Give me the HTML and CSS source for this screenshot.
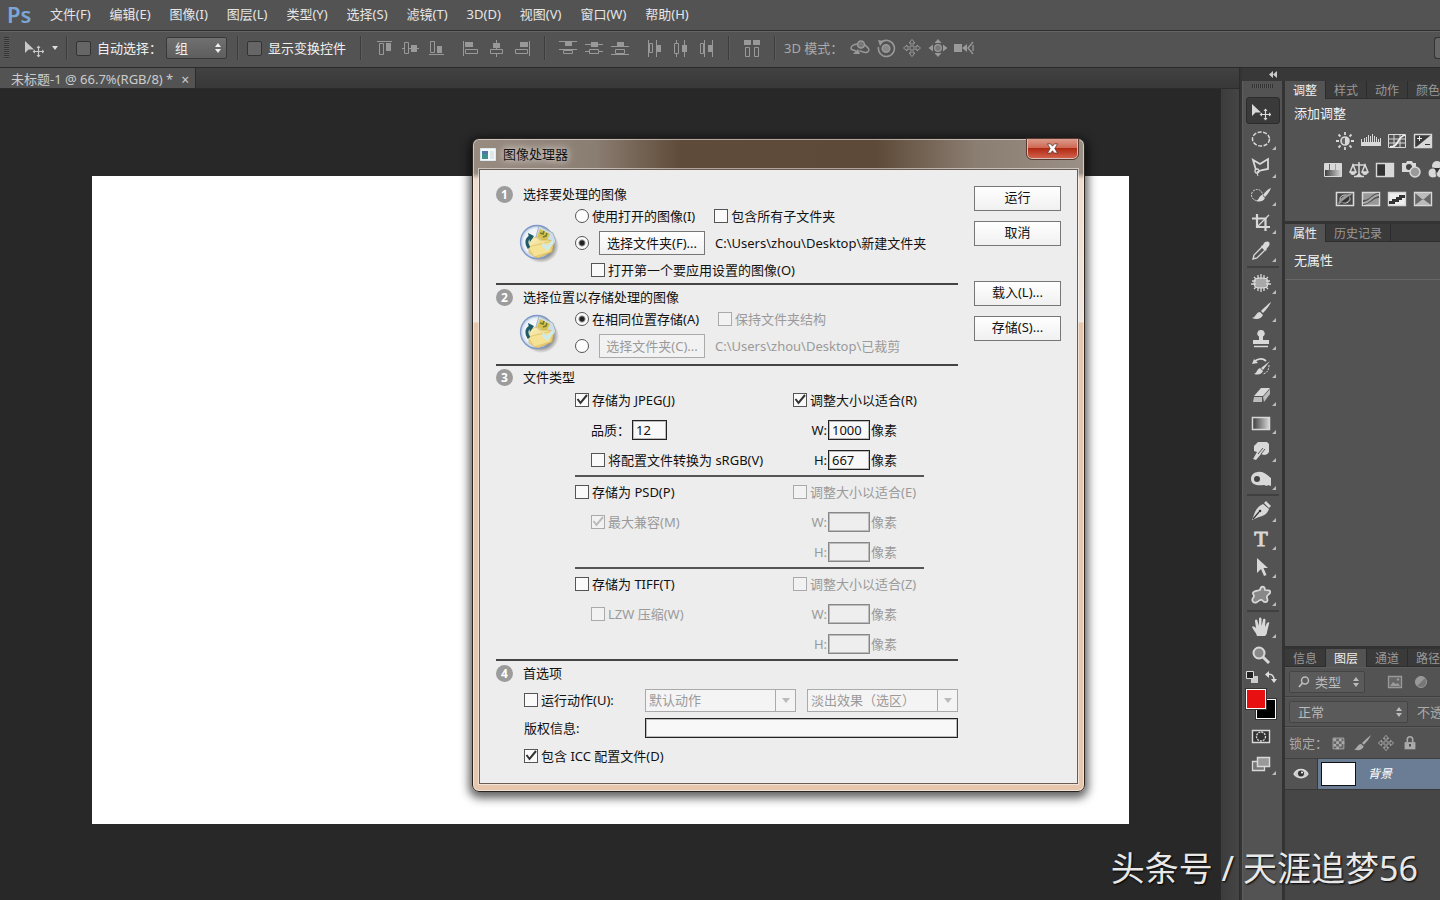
FILE: index.html
```html
<!DOCTYPE html>
<html lang="zh-CN">
<head>
<meta charset="utf-8">
<title>未标题-1</title>
<link rel="stylesheet" href="styles.css">
</head>
<body>
<svg class="defs" aria-hidden="true">
  <defs>
    <linearGradient id="fade" x1="0" x2="1"><stop offset="0" stop-color="#3c3c3c"/><stop offset="1" stop-color="#d8d8d8"/></linearGradient>
    <linearGradient id="folderFill" x1="0" x2="1" y1="0" y2="1"><stop offset="0" stop-color="#fbf2bd"/><stop offset="1" stop-color="#e3c35c"/></linearGradient>
    <radialGradient id="discFill"><stop offset="0" stop-color="#fff"/><stop offset=".8" stop-color="#eef3f8"/><stop offset="1" stop-color="#b4c6e0"/></radialGradient>
    <radialGradient id="discShade"><stop offset=".6" stop-color="#444" stop-opacity=".7"/><stop offset="1" stop-color="#444" stop-opacity="0"/></radialGradient>
  </defs>
  <symbol id="move" viewBox="0 0 20 20"><path d="M1 3v12l3.500-3.500H10z" fill="currentColor"/><path d="M14.500 8v11M9 13.500h11" stroke="currentColor" stroke-width="1.200"/><path d="M12.500 10l2-2.500 2 2.500zM12.500 17l2 2.500 2-2.500zM11 11.500l-2.500 2 2.500 2zM18 11.500l2.500 2-2.500 2z" fill="currentColor"/></symbol>
  <symbol id="cross" viewBox="0 0 20 20"><path d="M10 1.500l3 3.500h-2v4h4V7l3.500 3-3.500 3v-2h-4v4h2l-3 3.500L7 15h2v-4H5v2l-3.500-3L5 7v2h4V5H7z" fill="none" stroke="currentColor"/></symbol>
  <symbol id="al-top" viewBox="0 0 20 20"><path d="M3 3.500h15" stroke="currentColor"/><path d="M5.500 5.500h4v11h-4z" fill="none" stroke="currentColor"/><path d="M12 5h5v8h-5z" fill="currentColor"/></symbol>
  <symbol id="al-mid" viewBox="0 0 20 20"><path d="M2 10.500h3M9 10.500h10" stroke="currentColor"/><path d="M4.500 4.500h4v11h-4z" fill="none" stroke="currentColor"/><path d="M11 7h6v7h-6z" fill="currentColor"/></symbol>
  <symbol id="al-bot" viewBox="0 0 20 20"><path d="M3 16.500h15" stroke="currentColor"/><path d="M4.500 3.500h4v11h-4z" fill="none" stroke="currentColor"/><path d="M11 8h5v7h-5z" fill="currentColor"/></symbol>
  <symbol id="al-left" viewBox="0 0 20 20"><path d="M3.500 3v15" stroke="currentColor"/><path d="M5.500 11.500h12v4h-12z" fill="none" stroke="currentColor"/><path d="M5 4h8v5H5z" fill="currentColor"/></symbol>
  <symbol id="al-cen" viewBox="0 0 20 20"><path d="M10.500 2v9M10.500 16v3" stroke="currentColor"/><path d="M4.500 11.500h12v4h-12z" fill="none" stroke="currentColor"/><path d="M7 5h7v5H7z" fill="currentColor"/></symbol>
  <symbol id="al-right" viewBox="0 0 20 20"><path d="M17.500 3v15" stroke="currentColor"/><path d="M3.500 11.500h12v4h-12z" fill="none" stroke="currentColor"/><path d="M8 4h8v5H8z" fill="currentColor"/></symbol>
  <symbol id="di-top" viewBox="0 0 20 20"><path d="M1 3.500h18M1 11.500h18" stroke="currentColor"/><path d="M5.500 12.500h9v3h-9z" fill="none" stroke="currentColor"/><path d="M7 4h7v4H7z" fill="currentColor"/></symbol>
  <symbol id="di-mid" viewBox="0 0 20 20"><path d="M1 6.500h18M1 13.500h5M14 13.500h5" stroke="currentColor"/><path d="M5.500 11.500h9v4h-9z" fill="none" stroke="currentColor"/><path d="M7 4h7v5H7z" fill="currentColor"/></symbol>
  <symbol id="di-bot" viewBox="0 0 20 20"><path d="M1 8.500h18M1 16.500h18" stroke="currentColor"/><path d="M5.500 11.500h9v4h-9z" fill="none" stroke="currentColor"/><path d="M7 4h7v4H7z" fill="currentColor"/></symbol>
  <symbol id="di-left" viewBox="0 0 20 20"><path d="M4.500 2v17M12.500 2v17" stroke="currentColor"/><path d="M5.500 5.500h3v9h-3z" fill="none" stroke="currentColor"/><path d="M13 7h4v7h-4z" fill="currentColor"/></symbol>
  <symbol id="di-cen" viewBox="0 0 20 20"><path d="M6.500 2v3M6.500 16v3M14.500 2v17" stroke="currentColor"/><path d="M4.500 5.500h4v10h-4z" fill="none" stroke="currentColor"/><path d="M12 7h5v7h-5z" fill="currentColor"/></symbol>
  <symbol id="di-right" viewBox="0 0 20 20"><path d="M8.500 2v17M16.500 2v17" stroke="currentColor"/><path d="M4.500 5.500h3v10h-3z" fill="none" stroke="currentColor"/><path d="M12 7h4v7h-4z" fill="currentColor"/></symbol>
  <symbol id="auto" viewBox="0 0 20 20"><path d="M2 2h7v5H2zM11 2h7v5h-7z" fill="currentColor"/><path d="M3.500 9.500h4v9h-4zM12.500 9.500h4v9h-4z" fill="none" stroke="currentColor"/></symbol>
  <symbol id="orbit" viewBox="0 0 20 20"><path d="M8 6C3 6 0 9 1.500 11.500L6 13M13 6c4 2 8 6 4.500 8-3 1.500-6-.5-8-1.500" fill="none" stroke="currentColor" stroke-width="1.500"/><circle cx="11" cy="6.500" r="3.500" fill="#777" stroke="currentColor" stroke-width="1.500"/><path d="M3 16l5-5 2 5z" fill="currentColor"/></symbol>
  <symbol id="roll" viewBox="0 0 20 20"><path d="M5 4.500A8 8 0 1 1 2.500 9" fill="none" stroke="currentColor" stroke-width="1.600"/><circle cx="10" cy="10.500" r="3.800" fill="#888" stroke="currentColor" stroke-width="1.500"/><path d="M2 2l6 1-4 5z" fill="currentColor"/></symbol>
  <symbol id="slide" viewBox="0 0 20 20"><circle cx="10" cy="10" r="3.300" fill="#777" stroke="currentColor" stroke-width="1.300"/><path d="M6.500 5l3.500-4 3.500 4zM6.500 15l3.500 4 3.500-4zM5 6.500L.5 10 5 13.500zM15 6.500l4.500 3.500-4.500 3.500z" fill="currentColor"/></symbol>
  <symbol id="camera" viewBox="0 0 20 20"><path d="M0 6h8v8H0zM8 10l5-4v8z" fill="currentColor"/><path d="M19 4l-5 6 5 6M19 7v6" fill="none" stroke="currentColor" stroke-width="1.300"/></symbol>
  <symbol id="marquee" viewBox="0 0 20 20"><ellipse cx="10" cy="10" rx="8.500" ry="7" fill="none" stroke="currentColor" stroke-width="1.500" stroke-dasharray="4 1.500"/></symbol>
  <symbol id="lasso" viewBox="0 0 20 20"><path d="M5 13L2 3l7 4 8-5v10l-6 1-5 2" fill="none" stroke="currentColor" stroke-width="1.800"/><circle cx="6" cy="14" r="2" fill="none" stroke="currentColor" stroke-width="1.300"/><path d="M6 16l1 3" stroke="currentColor"/></symbol>
  <symbol id="quick" viewBox="0 0 20 20"><circle cx="6" cy="10" r="5.500" fill="none" stroke="currentColor" stroke-dasharray="2 1"/><path d="M20 3c-1 3-4 7-6 9l-2-2c2-3 5-6 8-7zM11 10l3 3c-2 4-6 4-9 3 3-1 3-5 6-6z" fill="currentColor"/></symbol>
  <symbol id="crop" viewBox="0 0 20 20"><path d="M6 1v13h13M1 5.500h13.500V18" fill="none" stroke="currentColor" stroke-width="2.200"/><path d="M6 14L18 2" stroke="currentColor" stroke-width="1.200"/></symbol>
  <symbol id="dropper" viewBox="0 0 20 20"><path d="M2 18l1-4 8-8 3 3-8 8z" fill="none" stroke="currentColor" stroke-width="1.300"/><path d="M10 5l2-1c1-4 5-4 6-3s1 4-2 6l-1 3z" fill="currentColor"/></symbol>
  <symbol id="heal" viewBox="0 0 20 20"><rect x="3" y="5" width="14" height="10" rx="4" fill="#a8a8a8" stroke="currentColor"/><path d="M7 2v4M10 1v5M13 2v4M7 14v4M10 14v5M13 14v4M1 8h4M0 11h5M15 8h4M15 11h5M3 4l2 2M17 4l-2 2M3 16l2-2M17 16l-2-2" stroke="currentColor" stroke-width="1.300"/></symbol>
  <symbol id="brush" viewBox="0 0 20 20"><path d="M20 1c-1 3-5 8-8 11l-2-2C13 7 17 3 20 1zM9 11l3 3c-2 4-6 5-11 3 4-1 4-6 8-6z" fill="currentColor"/></symbol>
  <symbol id="stamp" viewBox="0 0 20 20"><path d="M10 1a3.500 3.500 0 0 1 2 6.500V11h6v4H2v-4h6V7.500A3.500 3.500 0 0 1 10 1z" fill="currentColor"/><path d="M3 17.500h14" stroke="currentColor" stroke-width="1.500"/></symbol>
  <symbol id="history" viewBox="0 0 20 20"><path d="M3 5c4-4 9-4 12-1" fill="none" stroke="currentColor" stroke-width="1.800"/><path d="M1 7l2-5 4 4zM19 4l-7 9-2-2zM9 11l3 3c-2 4-5 4-9 3 3-1 3-5 6-6z" fill="currentColor"/><path d="M18 8c0 5-2 8-6 9" fill="none" stroke="currentColor" stroke-dasharray="2 1"/></symbol>
  <symbol id="eraser" viewBox="0 0 20 20"><path d="M10 3h9l-7 8H3z" fill="currentColor"/><path d="M3 12h8v5H2zM12 12l7-8v5l-6 8z" fill="#bbb"/></symbol>
  <symbol id="grad" viewBox="0 0 20 20"><path d="M1.500 4.500h17v12h-17z" fill="url(#fade)" stroke="currentColor" stroke-width="1.500"/></symbol>
  <symbol id="smudge" viewBox="0 0 20 20"><path d="M7 1h9l2 2v8c-1 2-3 3-5 3l-3-1-5 6-3-1 4-7-3-1V5z" fill="currentColor"/><path d="M7 13l5-6M10 13l4-5" stroke="#555"/></symbol>
  <symbol id="sponge" viewBox="0 0 20 20"><path d="M7 3c5-1 9 3 13 6v8l-3-1-1 1-3-1c-6 1-13 0-13-6 0-4 3-7 7-7z" fill="currentColor"/><circle cx="6" cy="10" r="3" fill="#444"/></symbol>
  <symbol id="pen" viewBox="0 0 20 20"><path d="M12 3l6 5c-2 5-5 7-10 8l-7 3 3-8c2-4 4-6 8-8zM13 2l2-2 5 5-2 2z" fill="currentColor"/><path d="M2 18l6-7" stroke="#333" stroke-width="1.200"/><circle cx="9" cy="10" r="1.300" fill="#333"/></symbol>
  <symbol id="arrow" viewBox="0 0 20 20"><path d="M6 1v15l4-4 3 7 2.500-1-3-7H17z" fill="currentColor"/></symbol>
  <symbol id="shape" viewBox="0 0 20 20"><path d="M9 5c1-5 5-4 5 0 3 0 6 0 5 3-1 2-4 2-3 5 2 4-2 6-5 2-2-1-3 1-5 2-3 2-6-1-4-4 1-1 2-2 0-4-1-3 4-3 7-4z" fill="#888" stroke="currentColor" stroke-width="1.700"/></symbol>
  <symbol id="hand" viewBox="0 0 20 20"><path d="M6 19c-1-4-4-6-5-9 1-2 3 0 4 1L4 4c0-2 2-2 2.500 0L8 9V2c0-2 2.500-2 2.500 0v7L12 3c.5-2 2.500-1 2.500 0L14 10l2-4c1-1 3-1 2 1l-2 8c0 2-1 3-2 4z" fill="currentColor"/></symbol>
  <symbol id="zoomtool" viewBox="0 0 20 20"><circle cx="8" cy="8" r="5.500" fill="#888" stroke="currentColor" stroke-width="2"/><path d="M12 12l6 6" stroke="currentColor" stroke-width="3"/></symbol>
  <symbol id="mask" viewBox="0 0 20 20"><path d="M1.500 4.500h17v12h-17z" fill="#333" stroke="currentColor" stroke-width="1.400"/><circle cx="10" cy="10.500" r="4.500" fill="none" stroke="currentColor" stroke-width="1.300" stroke-dasharray="2 1"/></symbol>
  <symbol id="screen" viewBox="0 0 20 20"><path d="M1.500 7.500h12v9h-12z" fill="#777" stroke="currentColor" stroke-width="1.300"/><path d="M6.500 3.500h12v9h-12z" fill="#999" stroke="currentColor" stroke-width="1.500"/></symbol>
  <symbol id="defcol" viewBox="0 0 12 12"><path d="M5 5h7v7H5z" fill="#ccc"/><path d="M.5.5h7v7h-7z" fill="#222" stroke="currentColor"/></symbol>
  <symbol id="swap" viewBox="0 0 12 12"><path d="M3 3.500c4-1 6 2 6 5" fill="none" stroke="currentColor" stroke-width="1.500"/><path d="M0 3.500L4 0v7zM6 8h6l-3 4z" fill="currentColor"/></symbol>
  <symbol id="sun" viewBox="0 0 20 20"><circle cx="10" cy="10" r="4" fill="#666" stroke="currentColor" stroke-width="1.600"/><path d="M10 6a4 4 0 0 1 0 8z" fill="currentColor"/><path d="M10 1v3M10 16v3M1 10h3M16 10h3M3.500 3.500l2 2M14.500 14.500l2 2M3.500 16.500l2-2M14.500 5.500l2-2" stroke="currentColor" stroke-width="1.800"/></symbol>
  <symbol id="levels" viewBox="0 0 20 20"><path d="M0 15V8h1v3h2V7h1v4h1V6h1v5h1V4h1v7h1V5h1v6h1V3h1v8h1V5h1v6h1V6h1v5h1V8h1v3h1V7h1v8z" fill="currentColor"/></symbol>
  <symbol id="curves" viewBox="0 0 20 20"><path d="M1.500 3.500h17v13h-17zM7 4v13M13 4v13M2 8h17M2 12h17" fill="none" stroke="currentColor"/><path d="M3 16c9 0 7-10 15-12" fill="none" stroke="#eee" stroke-width="1.800"/></symbol>
  <symbol id="expo" viewBox="0 0 20 20"><path d="M1.500 3.500h17v13h-17z" fill="#3a3a3a" stroke="currentColor" stroke-width="1.400"/><path d="M18 4v13H2z" fill="currentColor"/><path d="M4 7.500h5M6.500 5v5" stroke="#eee"/><path d="M12 13.500h5" stroke="#333"/></symbol>
  <symbol id="vib" viewBox="0 0 20 20"><path d="M1.500 3.500h17v13h-17z" fill="url(#fade)" stroke="currentColor"/><path d="M2 4h4v6H2zM7 4h5v6H7zM13 4h5v6h-5z" fill="currentColor"/></symbol>
  <symbol id="scales" viewBox="0 0 20 20"><path d="M10 2v12M3 5h14M4 5l-3 7h6zM16 5l-3 7h6zM5 16.500h10" fill="none" stroke="currentColor" stroke-width="1.500"/><path d="M1 12h6c0 4-6 4-6 0zM13 12h6c0 4-6 4-6 0zM10 13l4 4H6z" fill="currentColor"/></symbol>
  <symbol id="bw" viewBox="0 0 20 20"><path d="M1.500 3.500h17v13h-17z" fill="#333" stroke="currentColor" stroke-width="1.400"/><path d="M10 4h8v12h-8z" fill="currentColor"/></symbol>
  <symbol id="photo" viewBox="0 0 20 20"><path d="M1 3h4l1-2h5l1 2h3v9H1z" fill="currentColor"/><circle cx="8" cy="7" r="3" fill="#444"/><circle cx="14" cy="12" r="5" fill="#999" stroke="currentColor" stroke-width="1.500"/></symbol>
  <symbol id="mixer" viewBox="0 0 20 20"><circle cx="10" cy="6" r="5" fill="currentColor"/><circle cx="6" cy="13" r="5" fill="currentColor" stroke="#555"/><circle cx="14" cy="13" r="5" fill="currentColor" stroke="#555"/><path d="M7 8h6l-3 5z" fill="#333"/></symbol>
  <symbol id="invert" viewBox="0 0 20 20"><path d="M1.500 3.500h17v13h-17z" fill="#444" stroke="currentColor" stroke-width="1.600"/><ellipse cx="10" cy="10" rx="5" ry="4" fill="#444" stroke="currentColor"/><path d="M18 4C10 5 4 9 3 16l4-3c6 2 9-2 7-5z" fill="#999"/><path d="M6 13l8-6c2 4-3 8-8 6z" fill="#333"/></symbol>
  <symbol id="poster" viewBox="0 0 20 20"><path d="M1.500 3.500h17v13h-17z" fill="#999" stroke="currentColor" stroke-width="1.500"/><path d="M2 11c8 0 8-7 16-7v5C12 9 10 15 2 16z" fill="#555"/><path d="M2 14C9 14 11 6 18 6" fill="none" stroke="#aaa" stroke-width="2"/></symbol>
  <symbol id="thresh" viewBox="0 0 20 20"><path d="M1.500 3.500h17v13h-17z" fill="#eee" stroke="currentColor" stroke-width="1.400"/><path d="M2 12h3v-2h4V8h3V6h6v3h-3v2h-3v2H8v2H2z" fill="#333"/></symbol>
  <symbol id="gmap" viewBox="0 0 20 20"><path d="M1.500 3.500h17v13h-17z" fill="#666" stroke="currentColor" stroke-width="1.400"/><path d="M2 4l8 7 8-7zM2 16l8-6 8 6z" fill="#bbb"/></symbol>
  <symbol id="image" viewBox="0 0 20 20"><path d="M3.500 4.500h13v11h-13z" fill="#666" stroke="currentColor" stroke-width="1.300"/><path d="M5 14l3-4 3 2 2-1 2 3z" fill="currentColor"/><circle cx="13" cy="7.500" r="1.200" fill="currentColor"/></symbol>
  <symbol id="half" viewBox="0 0 20 20"><circle cx="10" cy="10" r="5.500" fill="#777" stroke="currentColor"/><path d="M6 14L14 6a5.500 5.500 0 0 0-8 8z" fill="currentColor"/></symbol>
  <symbol id="find" viewBox="0 0 12 12"><circle cx="7" cy="4.500" r="3.500" fill="none" stroke="currentColor" stroke-width="1.500"/><path d="M4.500 7L1 11" stroke="currentColor" stroke-width="1.800"/></symbol>
  <symbol id="checker" viewBox="0 0 20 20"><path d="M4.500 4.500h12v12h-12z" fill="#666" stroke="currentColor"/><path d="M5 5h3v3H5zM11 5h3v3h-3zM8 8h3v3H8zM14 8h3v3h-3zM5 11h3v3H5zM11 11h3v3h-3zM8 14h3v3H8z" fill="currentColor"/></symbol>
  <symbol id="lock" viewBox="0 0 20 20"><path d="M7 9V6c0-4 6-4 6 0v3" fill="none" stroke="currentColor" stroke-width="1.800"/><path d="M4 9h12v8H4z" fill="currentColor"/><path d="M10 11v3" stroke="#444" stroke-width="2"/></symbol>
  <symbol id="eye" viewBox="0 0 20 20"><path d="M3 10c3-6 11-6 14 0-3 5-11 5-14 0z" fill="#ccc" stroke="currentColor" stroke-width="1.300"/><circle cx="10" cy="9.500" r="3" fill="#333"/><circle cx="11" cy="8.500" r="1" fill="#fff"/></symbol>
  <symbol id="updown" viewBox="0 0 8 12"><path d="M1 5l3-4 3 4zM1 7l3 4 3-4z" fill="currentColor"/></symbol>
  <symbol id="folder" viewBox="0 0 40 40">
    <ellipse cx="22" cy="23" rx="18" ry="17" fill="url(#discShade)"/>
    <circle cx="18" cy="19" r="16.500" fill="url(#discFill)" stroke="#7d97c8" stroke-width="1.300"/>
    <path d="M20 3l14 7 3 9-6 6-15-8z" fill="#cfdde6" stroke="#93a8b4" stroke-width=".8"/>
    <path d="M21 6l10 5-4 8-9-5z" fill="#d8c24e"/><path d="M21 10l3 1 1-3M24 14l3-1 1-3" fill="none" stroke="#6f7a34" stroke-width="1.600"/>
    <path d="M10 17l7-3 4 3h9l5 2-2 10-14 6-9-5z" fill="url(#folderFill)" stroke="#c8a84a" stroke-width=".6"/>
    <path d="M9 24l8-2 18-4-4 11-16 5z" fill="#f5e294" stroke="#d7b95a" stroke-width=".6"/>
    <path d="M24 19l4 4 6-7 1 4-7 8-5-5z" fill="#cfeaea"/>
    <path d="M10 25c-3-4-3-9 1-11" fill="none" stroke="#1d5a66" stroke-width="3"/><path d="M9 10l6 3-4 6z" fill="#1d5a66"/>
  </symbol>
</svg>

<nav class="menubar">
  <span class="logo">Ps</span>
  <button>文件(F)</button><button>编辑(E)</button><button>图像(I)</button><button>图层(L)</button><button>类型(Y)</button><button>选择(S)</button><button>滤镜(T)</button><button>3D(D)</button><button>视图(V)</button><button>窗口(W)</button><button>帮助(H)</button>
</nav>

<div class="options">
  <i class="grip-v"></i>
  <button class="preset" aria-label="移动工具"><svg class="ic20"><use href="#move"/></svg><i class="caret"></i></button>
  <i class="vsep"></i>
  <label class="opt-check"><input type="checkbox">自动选择：</label>
  <span class="drop group-drop"><select aria-label="自动选择"><option>组</option></select><svg><use href="#updown"/></svg></span>
  <i class="vsep"></i>
  <label class="opt-check"><input type="checkbox">显示变换控件</label>
  <i class="vsep wide"></i>
  <div class="icons"><svg><use href="#al-top"/></svg><svg><use href="#al-mid"/></svg><svg><use href="#al-bot"/></svg></div>
  <div class="icons"><svg><use href="#al-left"/></svg><svg><use href="#al-cen"/></svg><svg><use href="#al-right"/></svg></div>
  <i class="vsep"></i>
  <div class="icons"><svg><use href="#di-top"/></svg><svg><use href="#di-mid"/></svg><svg><use href="#di-bot"/></svg></div>
  <div class="icons"><svg><use href="#di-left"/></svg><svg><use href="#di-cen"/></svg><svg><use href="#di-right"/></svg></div>
  <i class="vsep"></i>
  <div class="icons"><svg><use href="#auto"/></svg></div>
  <i class="vsep"></i>
  <span class="mode">3D 模式：</span>
  <div class="icons"><svg><use href="#orbit"/></svg><svg><use href="#roll"/></svg><svg><use href="#cross"/></svg><svg><use href="#slide"/></svg><svg><use href="#camera"/></svg></div>
  <i class="edge"></i>
</div>

<main class="main">
  <section class="document">
    <div class="doc-tabs"><div class="doc-tab">未标题-1 @ 66.7%(RGB/8) * <button aria-label="关闭">×</button></div></div>
    <div class="stage"><div class="viewport"><div class="paper"></div></div><div class="scroll"></div></div>
  </section>

  <section class="dock">
    <div class="dock-top"><span class="chev"></span></div>
    <div class="dock-body">
      <div class="tools">
        <i class="grip-h"></i>
        <button class="tool on" aria-label="移动"><svg><use href="#move"/></svg></button>
        <button class="tool" aria-label="选框"><svg><use href="#marquee"/></svg></button>
        <button class="tool" aria-label="套索"><svg><use href="#lasso"/></svg></button>
        <button class="tool" aria-label="快速选择"><svg><use href="#quick"/></svg></button>
        <button class="tool" aria-label="裁剪"><svg><use href="#crop"/></svg></button>
        <button class="tool" aria-label="吸管"><svg><use href="#dropper"/></svg></button>
        <i class="hsep"></i>
        <button class="tool" aria-label="修补"><svg><use href="#heal"/></svg></button>
        <button class="tool" aria-label="画笔"><svg><use href="#brush"/></svg></button>
        <button class="tool" aria-label="图章"><svg><use href="#stamp"/></svg></button>
        <button class="tool" aria-label="历史画笔"><svg><use href="#history"/></svg></button>
        <button class="tool" aria-label="橡皮擦"><svg><use href="#eraser"/></svg></button>
        <button class="tool" aria-label="渐变"><svg><use href="#grad"/></svg></button>
        <button class="tool" aria-label="涂抹"><svg><use href="#smudge"/></svg></button>
        <button class="tool" aria-label="海绵"><svg><use href="#sponge"/></svg></button>
        <i class="hsep"></i>
        <button class="tool" aria-label="钢笔"><svg><use href="#pen"/></svg></button>
        <button class="tool type" aria-label="文字"><span>T</span></button>
        <button class="tool" aria-label="路径选择"><svg><use href="#arrow"/></svg></button>
        <button class="tool" aria-label="形状"><svg><use href="#shape"/></svg></button>
        <i class="hsep"></i>
        <button class="tool" aria-label="抓手"><svg><use href="#hand"/></svg></button>
        <button class="tool plain" aria-label="缩放"><svg><use href="#zoomtool"/></svg></button>
        <div class="col-btns"><svg><use href="#defcol"/></svg><svg><use href="#swap"/></svg></div>
        <div class="swatches"><i class="fg"></i><i class="bg"></i></div>
        <button class="tool plain" aria-label="快速蒙版"><svg><use href="#mask"/></svg></button>
        <button class="tool" aria-label="屏幕模式"><svg><use href="#screen"/></svg></button>
      </div>

      <div class="panels">
        <div class="panel adjust">
          <div class="tabs"><button class="on">调整</button><button>样式</button><button>动作</button><button>颜色</button></div>
          <p class="ptitle">添加调整</p>
          <div class="adj odd"><svg><use href="#sun"/></svg><svg><use href="#levels"/></svg><svg><use href="#curves"/></svg><svg><use href="#expo"/></svg></div>
          <div class="adj"><svg><use href="#vib"/></svg><svg><use href="#scales"/></svg><svg><use href="#bw"/></svg><svg><use href="#photo"/></svg><svg><use href="#mixer"/></svg></div>
          <div class="adj odd"><svg><use href="#invert"/></svg><svg><use href="#poster"/></svg><svg><use href="#thresh"/></svg><svg><use href="#gmap"/></svg></div>
        </div>
        <div class="panel props">
          <div class="tabs"><button class="on">属性</button><button class="long">历史记录</button></div>
          <p class="ptitle noprop">无属性</p>
        </div>
        <div class="panel layers">
          <div class="tabs"><button>信息</button><button class="on">图层</button><button>通道</button><button>路径</button></div>
          <div class="lrow">
            <span class="drop kind"><svg class="find"><use href="#find"/></svg><select aria-label="类型"><option>类型</option></select><svg><use href="#updown"/></svg></span>
            <div class="icons dim"><svg><use href="#image"/></svg><svg><use href="#half"/></svg></div>
          </div>
          <div class="lrow">
            <span class="drop blend"><select aria-label="混合模式"><option>正常</option></select><svg><use href="#updown"/></svg></span>
            <span class="dimtext">不透明度：</span>
          </div>
          <div class="lrow locks"><span class="dimtext">锁定：</span><svg><use href="#checker"/></svg><svg><use href="#brush"/></svg><svg><use href="#cross"/></svg><svg><use href="#lock"/></svg></div>
          <div class="layer"><button class="eye" aria-label="可见"><svg><use href="#eye"/></svg></button><div class="linfo"><i class="thumb"></i><em>背景</em></div></div>
        </div>
      </div>
    </div>
  </section>
</main>

<form class="dialog">
  <header class="titlebar">
    <svg class="appicon" viewBox="0 0 16 13"><path d="M.5.5h15v12H.5z" fill="#f4f8fa" stroke="#dfe8ee"/><path d="M2 3h6v8H2z" fill="#3f8f8a"/><path d="M2 3h6v3H2z" fill="#4b78a8"/><path d="M10 3h4v8h-4z" fill="#dfe6ea"/></svg>
    <span class="title">图像处理器</span>
    <button type="button" class="close" aria-label="关闭"><svg viewBox="0 0 14 12"><path d="M1.500 1H5l2 2.500L9 1h3.500L9.500 6l3 5H9L7 8.500 5 11H1.500l3-5z" fill="#fff" stroke="#533" stroke-width=".8"/></svg></button>
  </header>
  <div class="client">
    <div class="form">
      <section class="sec">
        <h2><b>1</b>选择要处理的图像</h2>
        <div class="sbody">
          <div class="pic"><svg><use href="#folder"/></svg></div>
          <div class="rows">
            <div class="row"><label><input type="radio" name="src">使用打开的图像(I)</label><label class="second"><input type="checkbox">包含所有子文件夹</label></div>
            <div class="row"><input type="radio" name="src" checked aria-label="选择文件夹"><button type="button" class="btn pick">选择文件夹(F)...</button><span>C:\Users\zhou\Desktop\新建文件夹</span></div>
            <div class="row in"><label><input type="checkbox">打开第一个要应用设置的图像(O)</label></div>
          </div>
        </div>
      </section>
      <section class="sec two">
        <h2><b>2</b>选择位置以存储处理的图像</h2>
        <div class="sbody">
          <div class="pic"><svg><use href="#folder"/></svg></div>
          <div class="rows">
            <div class="row"><label><input type="radio" name="dst" checked>在相同位置存储(A)</label><label class="second off"><input type="checkbox" disabled>保持文件夹结构</label></div>
            <div class="row"><input type="radio" name="dst" aria-label="选择文件夹"><button type="button" class="btn pick" disabled>选择文件夹(C)...</button><span class="off">C:\Users\zhou\Desktop\已裁剪</span></div>
          </div>
        </div>
      </section>
      <section class="sec three">
        <h2><b>3</b>文件类型</h2>
        <div class="group">
          <div><label><input type="checkbox" checked>存储为 JPEG(J)</label></div><div><label><input type="checkbox" checked>调整大小以适合(R)</label></div>
          <div class="in"><label class="quality">品质：<input type="text" value="12"></label></div><div class="dim-row"><label for="w1">W:</label><input id="w1" type="text" value="1000">像素</div>
          <div class="in"><label><input type="checkbox">将配置文件转换为 sRGB(V)</label></div><div class="dim-row"><label for="h1">H:</label><input id="h1" type="text" value="667">像素</div>
        </div>
        <div class="group">
          <div><label><input type="checkbox">存储为 PSD(P)</label></div><div class="off"><label><input type="checkbox" disabled>调整大小以适合(E)</label></div>
          <div class="in off"><label><input type="checkbox" checked disabled>最大兼容(M)</label></div><div class="dim-row off"><label for="w2">W:</label><input id="w2" type="text" disabled>像素</div>
          <div></div><div class="dim-row off"><label for="h2">H:</label><input id="h2" type="text" disabled>像素</div>
        </div>
        <div class="group">
          <div><label><input type="checkbox">存储为 TIFF(T)</label></div><div class="off"><label><input type="checkbox" disabled>调整大小以适合(Z)</label></div>
          <div class="in off"><label><input type="checkbox" disabled>LZW 压缩(W)</label></div><div class="dim-row off"><label for="w3">W:</label><input id="w3" type="text" disabled>像素</div>
          <div></div><div class="dim-row off"><label for="h3">H:</label><input id="h3" type="text" disabled>像素</div>
        </div>
      </section>
      <section class="sec four">
        <h2><b>4</b>首选项</h2>
        <div class="prefs">
          <label><input type="checkbox">运行动作(U):</label>
          <div class="selects"><span class="sel"><select disabled aria-label="动作组"><option>默认动作</option></select></span><span class="sel"><select disabled aria-label="动作"><option>淡出效果（选区）</option></select></span></div>
          <label for="copy">版权信息:</label><input id="copy" type="text">
          <label class="full"><input type="checkbox" checked>包含 ICC 配置文件(D)</label>
        </div>
      </section>
    </div>
    <div class="actions">
      <button type="button" class="btn">运行</button><button type="button" class="btn">取消</button>
      <button type="button" class="btn apart">载入(L)...</button><button type="button" class="btn">存储(S)...</button>
    </div>
  </div>
</form>
<div class="watermark">头条号 / 天涯追梦56</div>
</body>
</html>
```
FILE: styles.css
```css
* { box-sizing: border-box; }
body {
  margin: 0; height: 100vh; overflow: hidden; position: relative;
  display: flex; flex-direction: column;
  background: #535353; color: #e6e6e6;
  font: 13px/16px "Noto Sans", "Noto Sans CJK SC", sans-serif;
  white-space: nowrap;
}
button, input, select { font: inherit; color: inherit; margin: 0; padding: 0; border: 0; background: none; border-radius: 0; }
h2, p { margin: 0; font-size: 13px; font-weight: 400; }
i { display: block; flex: none; }
svg { flex: none; display: block; }
select { appearance: none; }
.defs { position: absolute; width: 0; height: 0; }

/* menu bar */
.menubar { height: 31px; flex: none; display: flex; align-items: center; gap: 19px; padding: 0 7px 2px; border-bottom: 1px solid #2e2e2e; }
.logo { width: 24px; font-weight: 600; font-size: 22px; line-height: 28px; color: #7ba6d8; }

/* options bar */
.options { height: 37px; flex: none; display: flex; align-items: center; padding-bottom: 3px; border-top: 1px solid #666; border-bottom: 1px solid #2b2b2b; overflow: hidden; }
.grip-v { width: 5px; height: 22px; margin: 0 15px 0 4px; background: repeating-linear-gradient(#333 0 1px, #5c5c5c 1px 2px); }
.preset { display: flex; align-items: center; gap: 8px; color: #c8c8c8; }
.ic20, .icons svg { width: 20px; height: 20px; }
.caret { border: 3px solid transparent; border-top: 4px solid #ddd; border-bottom: 0; }
.vsep { width: 2px; height: 24px; margin: 0 8px; background: #3d3d3d; border-right: 1px solid #5c5c5c; }
.vsep.wide { margin-left: 14px; }
.opt-check { display: flex; align-items: center; gap: 6px; color: #f0f0f0; }
.opt-check input { appearance: none; width: 15px; height: 15px; border: 1px solid #333; border-radius: 2px; background: #666; }
.drop { flex: none; display: flex; align-items: center; justify-content: space-between; height: 22px; border: 1px solid #383838; border-radius: 2px; background: linear-gradient(#707070, #5e5e5e); padding: 0 4px 0 8px; color: #f0f0f0; }
.drop select { flex: 1; min-width: 0; }
.drop svg { width: 8px; height: 12px; }
.group-drop { width: 61px; margin: 0 2px 0 4px; }
.icons { display: flex; gap: 6px; margin: 0 4px; color: #999; }
.icons + .icons { margin-left: 10px; }
.mode { width: 62px; color: #aaa; }
.edge { width: 6px; height: 22px; margin-left: auto; border: 1px solid #333; border-right: 0; border-radius: 3px 0 0 3px; background: #666; }

/* document area */
.main { flex: 1; min-height: 0; display: flex; }
.document { flex: 1; min-width: 0; display: flex; flex-direction: column; border-right: 1px solid #2c2c2c; }
.doc-tabs { height: 21px; flex: none; background: linear-gradient(#424242, #383838); border-bottom: 1px solid #2c2c2c; display: flex; }
.doc-tab { padding: 3px 6px 0 11px; background: #535353; border-right: 1px solid #2c2c2c; color: #ccc; display: flex; gap: 8px; }
.doc-tab button { font-size: 14px; }
.stage { flex: 1; display: flex; background: #282828; }
.viewport { flex: 1; padding: 87px 92px 76px; display: flex; }
.paper { flex: 1; background: #fff; }
.scroll { width: 18px; background: linear-gradient(90deg, #3c3c3c, #454545); }

/* dock */
.dock { width: 200px; flex: none; display: flex; flex-direction: column; background: #333; padding-left: 2px; }
.dock-top { height: 13px; flex: none; background: #383838; padding: 3px 0 0 27px; }
.chev { display: flex; width: 8px; height: 7px; background: #ccc; clip-path: polygon(0 50%, 50% 0, 50% 50%, 100% 0, 100% 100%, 50% 50%, 50% 100%); }
.dock-body { flex: 1; display: flex; gap: 3px; min-height: 0; }
.tools { width: 40px; flex: none; background: #535353; display: flex; flex-direction: column; align-items: center; border-left: 1px solid #5e5e5e; }
.grip-h { width: 21px; height: 4px; margin: 3px 0 9px; background: repeating-linear-gradient(90deg, #333 0 1px, #5c5c5c 1px 2px); }
.tool { width: 34px; height: 28px; flex: none; position: relative; display: flex; align-items: center; justify-content: center; color: #d8d8d8; }
.tool svg { width: 20px; height: 20px; margin-right: 3px; }
.tool::after { content: ""; position: absolute; right: 4px; bottom: 3px; border: 2px solid transparent; border-right-color: #bbb; border-bottom-color: #bbb; }
.tool.plain::after, .tool.on::after { display: none; }
.tool.on { background: #3a3a3a; border: 1px solid #2c2c2c; border-radius: 3px; height: 27px; margin-bottom: 1px; }
.tool.type span { font: 400 22px/24px "Liberation Serif", serif; margin-right: 3px; -webkit-text-stroke: 1px #d8d8d8; }
.hsep { width: 32px; height: 2px; margin: 1px 0; background: #404040; }
.col-btns { width: 34px; display: flex; justify-content: space-between; padding: 2px 3px 0 0; color: #ddd; }
.col-btns svg { width: 12px; height: 12px; }
.swatches { width: 30px; height: 30px; margin: 6px 4px 3px 0; position: relative; }
.swatches i { position: absolute; width: 20px; height: 20px; border: 1px solid #fff; outline: 1px solid #333; }
.fg { left: 0; top: 0; background: #e81010; z-index: 1; }
.bg { right: 0; bottom: 0; background: #000; }

/* panels */
.panels { flex: 1; min-width: 0; display: flex; flex-direction: column; gap: 3px; }
.panel { background: #535353; overflow: hidden; flex: none; }
.tabs { height: 18px; display: flex; background: #3a3a3a; border-bottom: 1px solid #2e2e2e; color: #999; font-size: 12px; }
.tabs button { flex: none; width: 41px; padding-top: 2px; border-right: 1px solid #2c2c2c; }
.tabs button.long { width: 65px; }
.tabs button.on { background: #535353; color: #f0f0f0; height: 18px; }
.ptitle { padding: 6px 9px 0; color: #f0f0f0; line-height: 17px; }
.adjust { height: 140px; }
.adj { display: flex; gap: 6px; padding: 9px 0 0 38px; color: #d8d8d8; }
.adj.odd { padding-left: 50px; }
.adj svg { width: 20px; height: 20px; }
.props { flex: 1; }
.noprop { padding: 10px 9px; border-bottom: 1px solid #666; }
.layers { height: 251px; background: #464646; }
.lrow { height: 30px; background: #535353; border-bottom: 1px solid #3f3f3f; border-top: 1px solid #5c5c5c; display: flex; align-items: center; padding-left: 4px; gap: 9px; color: #aaa; }
.kind { width: 76px; gap: 5px; color: #bbb; background: #5a5a5a; border-color: #444; }
.kind .find { width: 12px; height: 12px; }
.blend { width: 119px; color: #bbb; background: #5a5a5a; border-color: #444; }
.icons.dim { margin-left: 11px; }
.locks svg { width: 18px; height: 18px; }
.locks { gap: 6px; height: 32px; }
.locks .dimtext { width: 34px; }
.layer { height: 31px; display: flex; border-bottom: 1px solid #383838; }
.eye { width: 33px; background: #535353; border-right: 1px solid #383838; color: #ddd; display: flex; align-items: center; justify-content: center; }
.eye svg { width: 20px; height: 20px; }
.linfo { flex: 1; display: flex; align-items: center; gap: 12px; padding-left: 3px; background: #6b7d94; color: #fff; font-size: 12px; }
.thumb { width: 35px; height: 24px; background: #fff; border: 1px solid #111; }

/* dialog */
.dialog {
  position: absolute; left: 472px; top: 138px; width: 613px;
  display: flex; flex-direction: column; padding: 0 6px 7px;
  border: 1px solid #2a2420; border-radius: 7px;
  background: linear-gradient(#0000 0 34px, #f1dccb 40px, #eee6e0 183px, #e6c6ac 184px),
    linear-gradient(90deg, #988b80, #8a7d71 20%, #5f4b39 34%, #5e4a38 66%, #8a7d71 82%, #9b9086);
  box-shadow: inset 0 0 0 1px #ffffff80, 0 3px 10px 3px #000000a0; color: #111;
}
.titlebar { height: 30px; display: flex; align-items: center; gap: 7px; padding-left: 1px; }
.appicon { width: 16px; height: 13px; }
.title { flex: 1; text-shadow: 0 0 6px #ffffffb0, 0 0 12px #ffffffb0; }
.close { align-self: flex-start; width: 51px; height: 20px; display: flex; align-items: center; justify-content: center; border: 1px solid #d8c0b8; border-top: 0; border-radius: 0 0 5px 5px; background: linear-gradient(#dc9c8c, #cf6a54 45%, #b02a14 50%, #d2604a); outline: 1px solid #5a3a30; }
.close svg { width: 13px; height: 11px; }
.client { border: 1px solid #6a5c52; outline: 1px solid #ffffff80; background: #ededed; display: flex; gap: 16px; padding: 16px 16px 13px; }
.form { flex: 1; min-width: 0; }
.sec { border-bottom: 2px solid #444; padding-top: 4px; }
.sec:first-child { padding-top: 0; }
.sec.two { padding-bottom: 5px; }
.sec.three { padding-top: 3px; }
.sec.four { border: 0; }
.sec h2 { display: flex; gap: 10px; height: 16px; }
.sec h2 b { width: 17px; height: 17px; border-radius: 9px; background: #9c9c9c; color: #fff; font-size: 12px; line-height: 17px; text-align: center; }
.sbody { display: flex; padding-top: 1px; }
.pic { width: 79px; padding-left: 23px; display: flex; align-items: center; }
.pic svg { width: 40px; height: 40px; }
.rows { display: grid; gap: 1px; }
.row { height: 26px; display: flex; align-items: center; }
.row span { margin-left: 10px; }
.in { padding-left: 16px; }
.second { margin-left: 19px; }
.dialog label { display: flex; align-items: center; gap: 3px; }
.off { color: #9a9a9a; }
input[type="radio"] { appearance: none; width: 14px; height: 14px; border: 1px solid #555; border-radius: 50%; background: #fdfdfd; flex: none; }
input[type="radio"]:checked { background: radial-gradient(#222 0 2px, #fdfdfd 4px); }
.dialog input[type="checkbox"] { appearance: none; width: 14px; height: 14px; border: 1px solid #555; background: #fafafa; flex: none; }
.dialog input[type="checkbox"]:checked { background: #fafafa url("data:image/svg+xml,%3Csvg xmlns='http://www.w3.org/2000/svg' viewBox='0 0 12 12'%3E%3Cpath d='M1.500 5l3 4L11 1' fill='none' stroke='%23333' stroke-width='2'/%3E%3C/svg%3E"); }
.dialog input[type="checkbox"]:disabled { border-color: #aaa; background-color: #f2f2f2; }
.dialog input[type="checkbox"]:disabled:checked { background-image: url("data:image/svg+xml,%3Csvg xmlns='http://www.w3.org/2000/svg' viewBox='0 0 12 12'%3E%3Cpath d='M1.500 5l3 4L11 1' fill='none' stroke='%23bbb' stroke-width='2'/%3E%3C/svg%3E"); }
.btn { height: 25px; padding-bottom: 3px; border: 1px solid #777; background: linear-gradient(#fff, #f0f0f0); text-align: center; }
.btn:disabled { color: #9a9a9a; border-color: #aaa; background: #f2f2f2; }
.pick { width: 106px; height: 24px; margin-left: 10px; padding-bottom: 1px; }
.group { display: grid; grid-template-columns: 218px 131px; grid-auto-rows: 30px; width: 349px; margin-left: 79px; }
.group + .group { border-top: 2px solid #555; }
.group > div { display: flex; align-items: center; }
.dialog input[type="text"] { height: 20px; border: 1px solid #222; outline: 1px solid #bbb; outline-offset: -2px; background: #f8f8f8; padding-left: 3px; }
.dialog input[type="text"]:disabled { border-color: #888; background: #eee; }
.dialog .quality { gap: 2px; }
.quality input { width: 35px; }
.dim-row label { width: 34px; justify-content: flex-end; margin-right: 1px; }
.dim-row input { width: 42px; margin-right: 1px; }
.prefs { display: grid; grid-template-columns: 149px 1fr; grid-auto-rows: 28px; align-items: center; padding: 5px 0 0; }
.prefs label { padding-left: 28px; }
.prefs .full { grid-column: span 2; }
.selects { display: flex; gap: 11px; }
.sel { flex: 1; min-width: 0; height: 23px; display: flex; position: relative; border: 1px solid #aaa; color: #9a9a9a; background: #f4f4f4; }
.sel select { flex: 1; min-width: 0; padding-left: 3px; opacity: 1; margin-right: 19px; border-right: 1px solid #aaa; }
.sel::after { content: ""; position: absolute; right: 5px; top: 8px; border: 4px solid transparent; border-top: 5px solid #bbb; border-bottom: 0; }
.actions { width: 87px; display: flex; flex-direction: column; gap: 10px; }
.apart { margin-top: 25px; }

.watermark { position: absolute; right: 22px; bottom: 10px; color: #e8e8e8; font: 400 34px/44px "Noto Sans", "Noto Sans CJK SC", sans-serif; text-shadow: 1px 1px 2px #000; }
```
